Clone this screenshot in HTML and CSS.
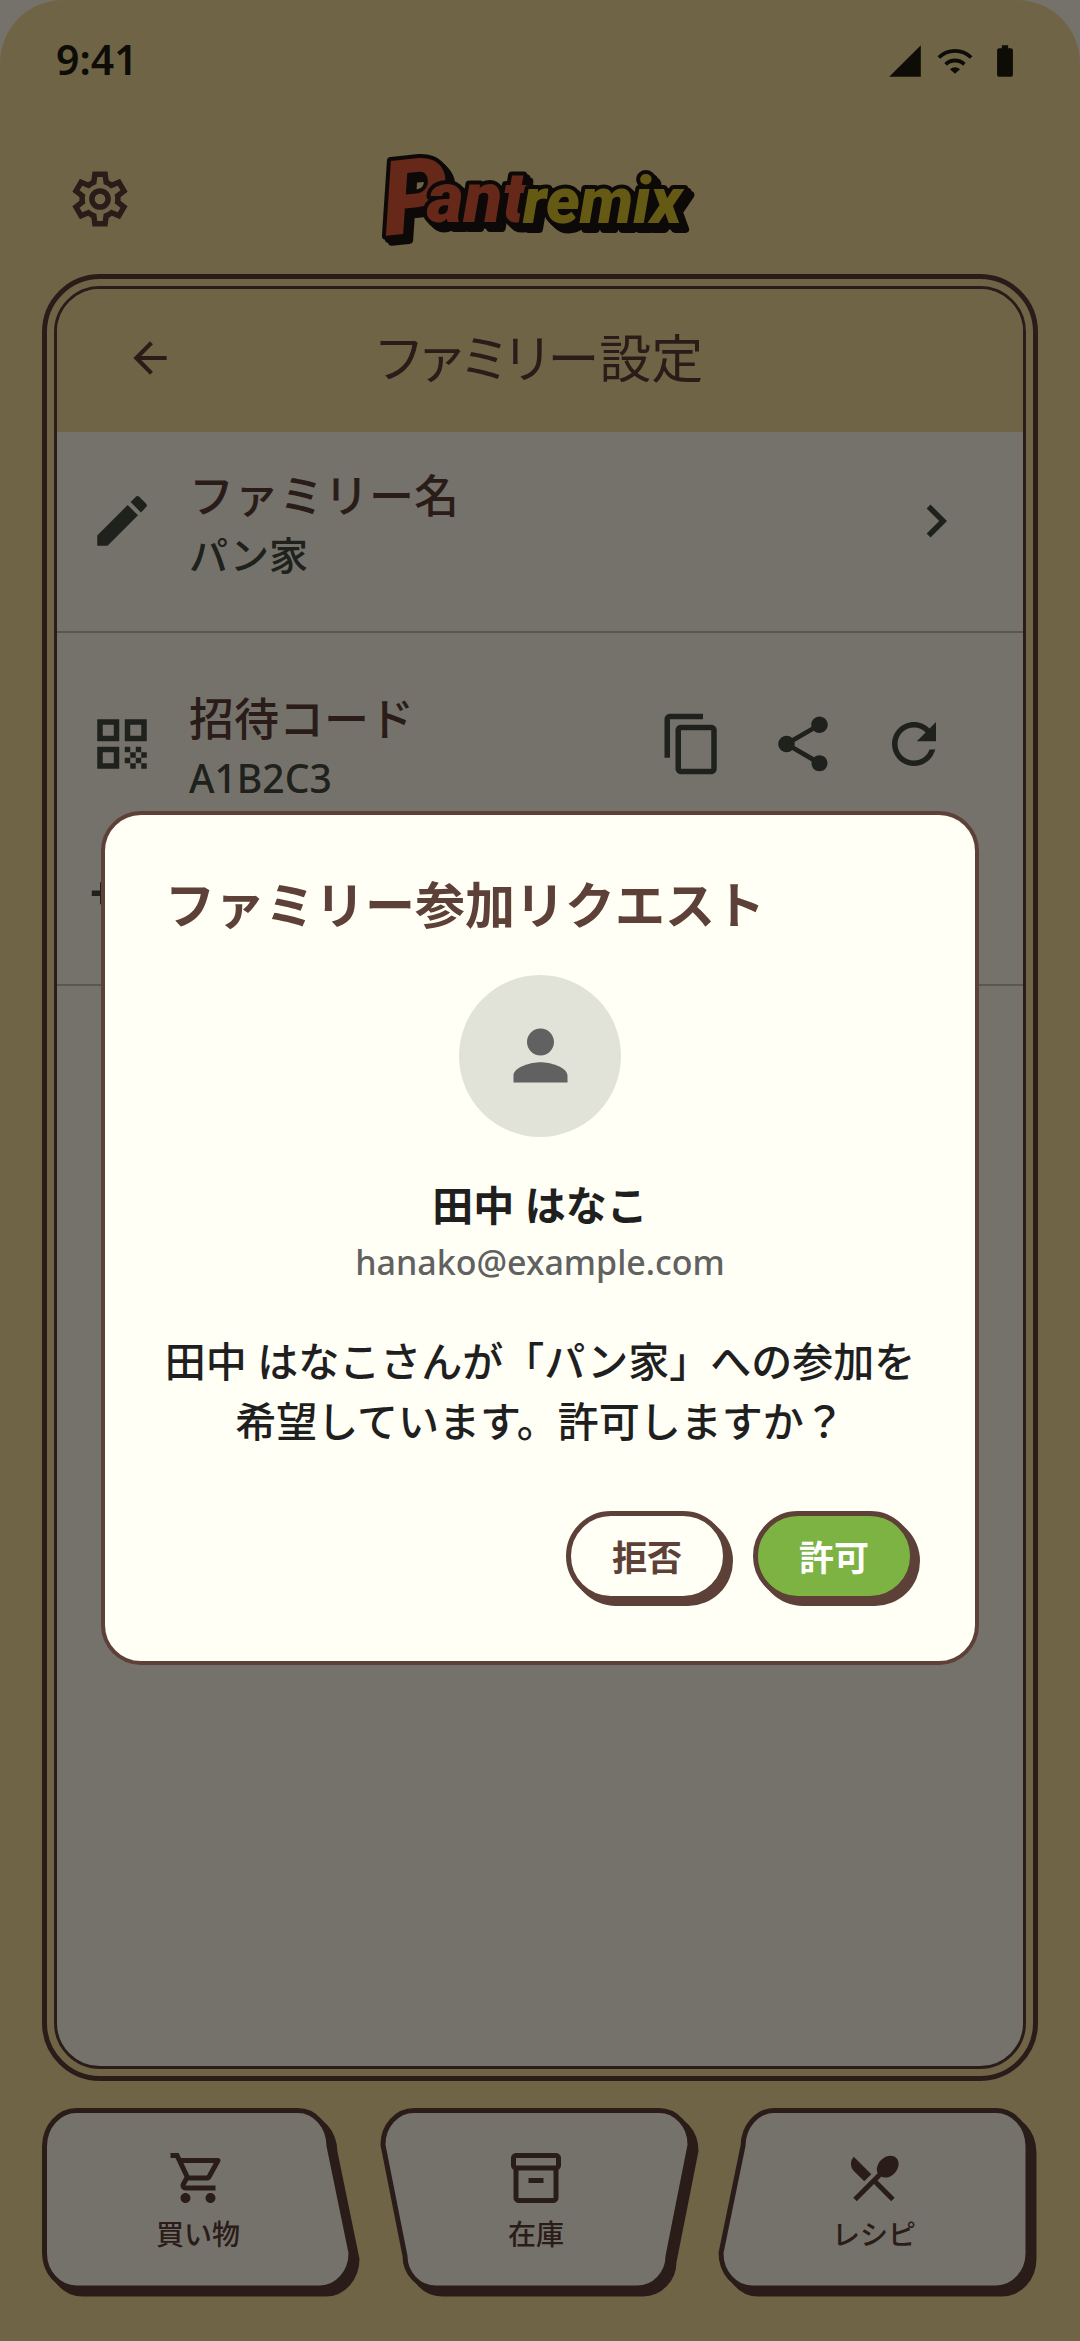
FILE: index.html
```html
<!DOCTYPE html>
<html lang="ja">
<head>
    <meta charset="UTF-8">
    <meta name="viewport" content="width=device-width, initial-scale=1.0">
    <title>Pantremix - ファミリー設定</title>
    <link rel="stylesheet" href="styles.css">
</head>
<body>
    <div class="app">
        <div class="status">
            <span class="time">9:41</span>
            <div class="statusIcons">
                <svg viewBox="0 0 24 24"><path d="M2 22h20V2z"/></svg>
                <svg viewBox="0 0 24 24">
                    <path class="arc" d="M1.8 9.8a14.4 14.4 0 0 1 20.4 0M6.1 14.1a8.4 8.4 0 0 1 11.8 0"/>
                    <path d="M12 20l-3.2-2.8a4.6 4.6 0 0 1 6.4 0z"/>
                </svg>
                <svg viewBox="0 0 24 24"><path d="M15.67 4H14V2h-4v2H8.33C7.6 4 7 4.6 7 5.33v15.33C7 21.4 7.6 22 8.33 22h7.33c.74 0 1.34-.6 1.34-1.33V5.33C17 4.6 16.4 4 15.67 4z"/></svg>
            </div>
        </div>

        <header class="topbar">
            <button class="iconBtn gear" aria-label="設定">
                <svg class="icon" viewBox="0 -960 960 960">
                    <path d="m370-80-16-128q-13-5-24.5-12T307-235l-119 50L78-375l103-78q-1-7-1-13.5v-27q0-6.5 1-13.5L78-585l110-190 119 50q11-8 23-15t24-12l16-128h220l16 128q13 5 24.5 12t22.5 15l119-50 110 190-103 78q1 7 1 13.5v27q0 6.5-2 13.5l103 78-110 190-118-50q-11 8-23 15t-24 12L590-80H370Zm70-80h79l14-106q31-8 57.5-23.5T639-327l99 41 39-68-86-65q5-14 7-29.5t2-31.5q0-16-2-31.5t-7-29.5l86-65-39-68-99 42q-22-23-48.5-38.5T533-694l-13-106h-79l-14 106q-31 8-57.5 23.5T321-633l-99-41-39 68 86 64q-5 15-7 30t-2 32q0 16 2 31t7 30l-86 65 39 68 99-42q22 23 48.5 38.5T427-266l13 106Z"/>
                    <circle class="ring" cx="480" cy="-480" r="118"/>
                </svg>
            </button>
            <svg class="logo" viewBox="0 0 320 100">
                <g class="logoText">
                    <text class="logoP" x="2" y="84" transform="rotate(-6 30 50)">P</text>
                    <text class="logoRed" x="47" y="73">ant</text>
                    <text class="logoYellow" x="143" y="74">remix</text>
                </g>
            </svg>
        </header>

        <main class="frame">
            <div class="panel">
                <div class="panelHead">
                    <button class="iconBtn back" aria-label="戻る">
                        <svg viewBox="0 0 24 24"><path d="M20 11H7.83l5.59-5.59L12 4l-8 8 8 8 1.41-1.41L7.83 13H20v-2z"/></svg>
                    </button>
                    <h1>ファミリー設定</h1>
                </div>
                <ul class="list">
                    <li class="row rowName">
                        <svg class="icon" viewBox="0 0 24 24"><path d="M3 17.25V21h3.75L17.81 9.94l-3.75-3.75L3 17.25zM20.71 7.04a1 1 0 0 0 0-1.41l-2.34-2.34a1 1 0 0 0-1.41 0l-1.83 1.83 3.75 3.75 1.83-1.83z"/></svg>
                        <div class="rowText">
                            <h2>ファミリー名</h2>
                            <p>パン家</p>
                        </div>
                        <svg class="icon" viewBox="0 0 24 24"><path d="M10 6L8.59 7.41 13.17 12l-4.58 4.59L10 18l6-6z"/></svg>
                    </li>
                    <li class="row rowCode">
                        <svg class="icon" viewBox="0 0 24 24"><path d="M3 11h8V3H3v8zm2-6h4v4H5V5zM3 21h8v-8H3v8zm2-6h4v4H5v-4zM13 3v8h8V3h-8zm6 6h-4V5h4v4zM19 19h2v2h-2zM13 13h2v2h-2zM15 15h2v2h-2zM13 17h2v2h-2zM15 19h2v2h-2zM17 17h2v2h-2zM17 13h2v2h-2zM19 15h2v2h-2z"/></svg>
                        <div class="rowText">
                            <h2>招待コード</h2>
                            <p>A1B2C3</p>
                        </div>
                        <div class="actions">
                            <button class="iconBtn" aria-label="コピー">
                                <svg class="icon" viewBox="0 0 24 24"><path d="M16 1H4c-1.1 0-2 .9-2 2v14h2V3h12V1zm3 4H8c-1.1 0-2 .9-2 2v14c0 1.1.9 2 2 2h11c1.1 0 2-.9 2-2V7c0-1.1-.9-2-2-2zm0 16H8V7h11v14z"/></svg>
                            </button>
                            <button class="iconBtn" aria-label="共有">
                                <svg class="icon" viewBox="0 0 24 24"><path d="M18 16.08c-.76 0-1.44.3-1.96.77L8.91 12.7c.05-.23.09-.46.09-.7s-.04-.47-.09-.7l7.05-4.11c.54.5 1.25.81 2.04.81 1.66 0 3-1.34 3-3s-1.34-3-3-3-3 1.34-3 3c0 .24.04.47.09.7L8.04 9.81C7.5 9.31 6.79 9 6 9c-1.66 0-3 1.34-3 3s1.34 3 3 3c.79 0 1.5-.31 2.04-.81l7.12 4.16c-.05.21-.08.43-.08.65 0 1.61 1.31 2.92 2.92 2.92s2.92-1.31 2.92-2.92-1.31-2.92-2.92-2.92z"/></svg>
                            </button>
                            <button class="iconBtn" aria-label="更新">
                                <svg class="icon" viewBox="0 0 24 24"><path d="M17.65 6.35C16.2 4.9 14.21 4 12 4c-4.42 0-7.99 3.58-7.99 8s3.57 8 7.99 8c3.73 0 6.84-2.55 7.73-6h-2.08c-.82 2.33-3.04 4-5.65 4-3.31 0-6-2.69-6-6s2.69-6 6-6c1.66 0 3.14.69 4.22 1.78L13 11h7V4l-2.35 2.35z"/></svg>
                            </button>
                        </div>
                    </li>
                    <li class="row rowAdd">
                        <svg class="icon" viewBox="0 0 24 24"><path d="M15 12c2.21 0 4-1.79 4-4s-1.79-4-4-4-4 1.79-4 4 1.79 4 4 4zm-9-2V7H4v3H1v2h3v3h2v-3h3v-2H6zm9 4c-2.67 0-8 1.34-8 4v2h16v-2c0-2.66-5.33-4-8-4z"/></svg>
                    </li>
                </ul>
            </div>
        </main>

        <nav class="tabs">
            <a class="tab" href="#shopping">
                <svg class="tabShape" viewBox="0 0 320 189" preserveAspectRatio="none">
                    <path d="M34.5 2.5H256A31 36 0 0 1 287 38L309 145A31 35 0 0 1 278 180H34.5A32 35 0 0 1 2.5 145V38A32 36 0 0 1 34.5 2.5Z"/>
                </svg>
                <span class="tabBody">
                    <svg viewBox="0 0 24 24"><path d="M15.55 13c.75 0 1.41-.41 1.75-1.03l3.58-6.49A.996.996 0 0 0 20.01 4H5.21l-.94-2H1v2h2l3.6 7.59-1.35 2.44C4.52 15.37 5.48 17 7 17h12v-2H7l1.1-2h7.45zM6.16 6h12.15l-2.76 5H8.53L6.16 6zM7 18c-1.1 0-1.99.9-1.99 2S5.9 22 7 22s2-.9 2-2-.9-2-2-2zm10 0c-1.1 0-1.99.9-1.99 2s.89 2 1.99 2 2-.9 2-2-.9-2-2-2z"/></svg>
                    買い物
                </span>
            </a>
            <a class="tab" href="#stock">
                <svg class="tabShape" viewBox="0 0 320 189" preserveAspectRatio="none">
                    <path d="M34 2.5H279A31 34 0 0 1 310 37L288 148A31 32 0 0 1 257 180H56A31 32 0 0 1 25 148L3 37A31 34 0 0 1 34 2.5Z"/>
                </svg>
                <span class="tabBody">
                    <svg viewBox="0 0 24 24"><path d="M20 2H4c-1 0-2 .9-2 2v3.01c0 .72.43 1.34 1 1.69V20c0 1.1 1.1 2 2 2h14c.9 0 2-.9 2-2V8.7c.57-.35 1-.97 1-1.69V4c0-1.1-1-2-2-2zm-1 18H5V9h14v11zm1-13H4V4h16v3zM9 12h6v2H9z"/></svg>
                    在庫
                </span>
            </a>
            <a class="tab" href="#recipe">
                <svg class="tabShape" viewBox="0 0 320 189" preserveAspectRatio="none">
                    <path d="M56 2.5H278A32 36 0 0 1 310 38V145A32 35 0 0 1 278 180H34A31 35 0 0 1 3 145L25 38A31 36 0 0 1 56 2.5Z"/>
                </svg>
                <span class="tabBody">
                    <svg viewBox="0 0 24 24"><path d="M8.1 13.34l2.83-2.83L3.91 3.5a4.008 4.008 0 0 0 0 5.66l4.19 4.18zm6.78-1.81c1.53.71 3.68.21 5.27-1.38 1.91-1.91 2.28-4.65.81-6.12-1.46-1.46-4.2-1.1-6.12.81-1.59 1.59-2.09 3.74-1.38 5.27L3.7 19.87l1.41 1.41L12 14.41l6.88 6.88 1.41-1.41L13.41 13l1.47-1.47z"/></svg>
                    レシピ
                </span>
            </a>
        </nav>
    </div>

    <div class="overlay">
        <section class="modal" role="dialog" aria-modal="true" aria-labelledby="modalTitle">
            <h2 id="modalTitle">ファミリー参加リクエスト</h2>
            <div class="avatar">
                <svg viewBox="0 0 24 24"><path d="M12 12c2.21 0 4-1.79 4-4s-1.79-4-4-4-4 1.79-4 4 1.79 4 4 4zm0 2c-2.67 0-8 1.34-8 4v2h16v-2c0-2.66-5.33-4-8-4z"/></svg>
            </div>
            <p class="name">田中 はなこ</p>
            <p class="email">hanako@example.com</p>
            <p class="message">田中 はなこさんが「パン家」への参加を<br>希望しています。許可しますか？</p>
            <div class="buttons">
                <button class="btn">拒否</button>
                <button class="btn allow">許可</button>
            </div>
        </section>
    </div>
</body>
</html>
```

FILE: styles.css
```css
* {
    margin: 0;
    padding: 0;
    box-sizing: border-box;
}
body {
    background-color: #fff9ea;
    color: #43483e;
    font-family: "Noto Sans", "Noto Sans CJK JP", sans-serif;
}
svg {
    display: block;
    fill: currentColor;
}
button {
    font-family: inherit;
    cursor: pointer;
}
.app {
    min-height: 100vh;
    display: flex;
    flex-direction: column;
    padding-bottom: 44px;
    background-color: #f3db9c;
    border-radius: 63px 63px 0 0;
}

/* status bar */
.status {
    height: 122px;
    padding: 0 56px;
    display: flex;
    align-items: center;
    justify-content: space-between;
    color: #201c10;
}
.time {
    font-size: 41px;
    line-height: 50px;
    font-weight: 600;
    padding-bottom: 4px;
}
.statusIcons {
    display: flex;
    gap: 12px;
}
.statusIcons svg {
    width: 38px;
    height: 38px;
}
.arc {
    fill: none;
    stroke: currentColor;
    stroke-width: 2.4;
}

/* top bar */
.topbar {
    height: 152px;
    padding: 2px 67px 0;
    display: grid;
    grid-template-columns: 66px 1fr 66px;
    align-items: center;
    justify-items: center;
}
.icon {
    width: 66px;
    height: 66px;
    flex-shrink: 0;
}
.iconBtn {
    padding: 22px;
    border: none;
    background: none;
    color: inherit;
}
.gear {
    padding: 0;
    color: #5d4037;
}
.ring {
    fill: none;
    stroke: currentColor;
    stroke-width: 80;
}
.logo {
    width: 320px;
    height: 100px;
    overflow: visible;
}
.logoText {
    font-family: Roboto, sans-serif;
    font-size: 64px;
    font-weight: 900;
    font-style: italic;
    stroke: #1c1512;
    stroke-width: 8px;
    stroke-linejoin: round;
    paint-order: stroke;
    filter: drop-shadow(3px 3px 0 #1c1512) drop-shadow(3px 3px 0 #1c1512);
}
.logoP {
    fill: #dd5738;
    font-size: 104px;
}
.logoRed {
    fill: #dd5738;
    font-size: 71px;
}
.logoYellow {
    fill: #dcc42c;
}

/* double framed panel */
.frame {
    flex: 1;
    display: flex;
    margin: 0 42px;
    padding: 7px;
    border: 5px solid #5d4037;
    border-radius: 58px;
}
.panel {
    flex: 1;
    border: 3px solid #5d4037;
    border-radius: 46px;
    background-color: #fff9ea;
    overflow: hidden;
}
.panelHead {
    height: 143px;
    padding: 0 68px 6px;
    display: grid;
    grid-template-columns: 50px 1fr 50px;
    align-items: center;
    justify-items: center;
    background-color: #f3db9c;
    color: #5d4037;
}
.back {
    padding: 0;
}
.back svg {
    width: 50px;
    height: 50px;
}
h1 {
    font-size: 52px;
    line-height: 60px;
    font-weight: 400;
    font-feature-settings: "palt";
}
.list {
    list-style: none;
}
.row {
    display: flex;
    align-items: center;
    padding: 0 54px 0 32px;
}
.rowName {
    padding-top: 26px;
    padding-bottom: 47px;
    border-bottom: 2px solid #c4bdae;
}
.rowCode {
    padding-top: 48px;
}
.rowAdd {
    min-height: 179px;
    border-bottom: 2px solid #c4bdae;
}
.rowText {
    flex: 1;
    padding: 8px 0 0 34px;
}
.rowText h2 {
    font-size: 45px;
    line-height: 60px;
    font-weight: 500;
    color: #5d4037;
}
.rowText p {
    font-size: 39px;
    line-height: 58px;
    font-weight: 500;
}
.actions {
    display: flex;
    gap: 1px;
}

/* bottom tabs */
.tabs {
    display: grid;
    grid-template-columns: repeat(3, 1fr);
    gap: 18px;
    padding: 27px 42px 0;
}
.tab {
    display: grid;
    color: #5d4037;
    text-decoration: none;
}
.tabShape,
.tabBody {
    grid-area: 1 / 1;
}
.tabShape {
    width: 100%;
    height: 189px;
    fill: #fff9ea;
    stroke: #5d4037;
    stroke-width: 5px;
    filter: drop-shadow(6px 6px 0 #5d4037);
}
.tabBody {
    display: flex;
    flex-direction: column;
    align-items: center;
    gap: 6px;
    padding: 40px 8px 0 0;
    font-size: 28px;
    line-height: 40px;
    font-weight: 500;
    z-index: 1;
}
.tabBody svg {
    width: 60px;
    height: 60px;
}

/* join request dialog */
.overlay {
    position: fixed;
    inset: 0;
    z-index: 2;
    display: flex;
    align-items: center;
    justify-content: center;
    padding: 134px 101px 0;
    background-color: rgba(0, 0, 0, 0.54);
}
.modal {
    width: 100%;
    padding: 60px;
    display: flex;
    flex-direction: column;
    align-items: center;
    background-color: #fffff6;
    border: 4px solid #5d4037;
    border-radius: 40px;
    color: #1f1f1f;
}
.modal h2 {
    align-self: flex-start;
    font-size: 50px;
    line-height: 60px;
    font-weight: 700;
    color: #5d4037;
}
.avatar {
    width: 162px;
    height: 162px;
    margin: 40px 0;
    display: flex;
    align-items: center;
    justify-content: center;
    border-radius: 50%;
    background-color: #e1e3d8;
    color: #616161;
}
.avatar svg {
    width: 81px;
    height: 81px;
}
.name {
    font-size: 41px;
    line-height: 56px;
    font-weight: 700;
}
.email {
    font-size: 34px;
    line-height: 58px;
    font-weight: 500;
    color: #616161;
}
.message {
    margin: 40px 0 60px;
    font-size: 41px;
    line-height: 60px;
    font-weight: 500;
    text-align: center;
    white-space: nowrap;
}
.buttons {
    align-self: flex-end;
    display: flex;
    gap: 25px;
}
.btn {
    width: 162px;
    height: 90px;
    border: 5px solid #5d4037;
    border-radius: 45px;
    box-shadow: 5px 5px 0 #5d4037;
    background-color: #fffff6;
    color: #5d4037;
    font-size: 35px;
    font-weight: 700;
}
.allow {
    background-color: #7cb342;
    color: white;
}
```
